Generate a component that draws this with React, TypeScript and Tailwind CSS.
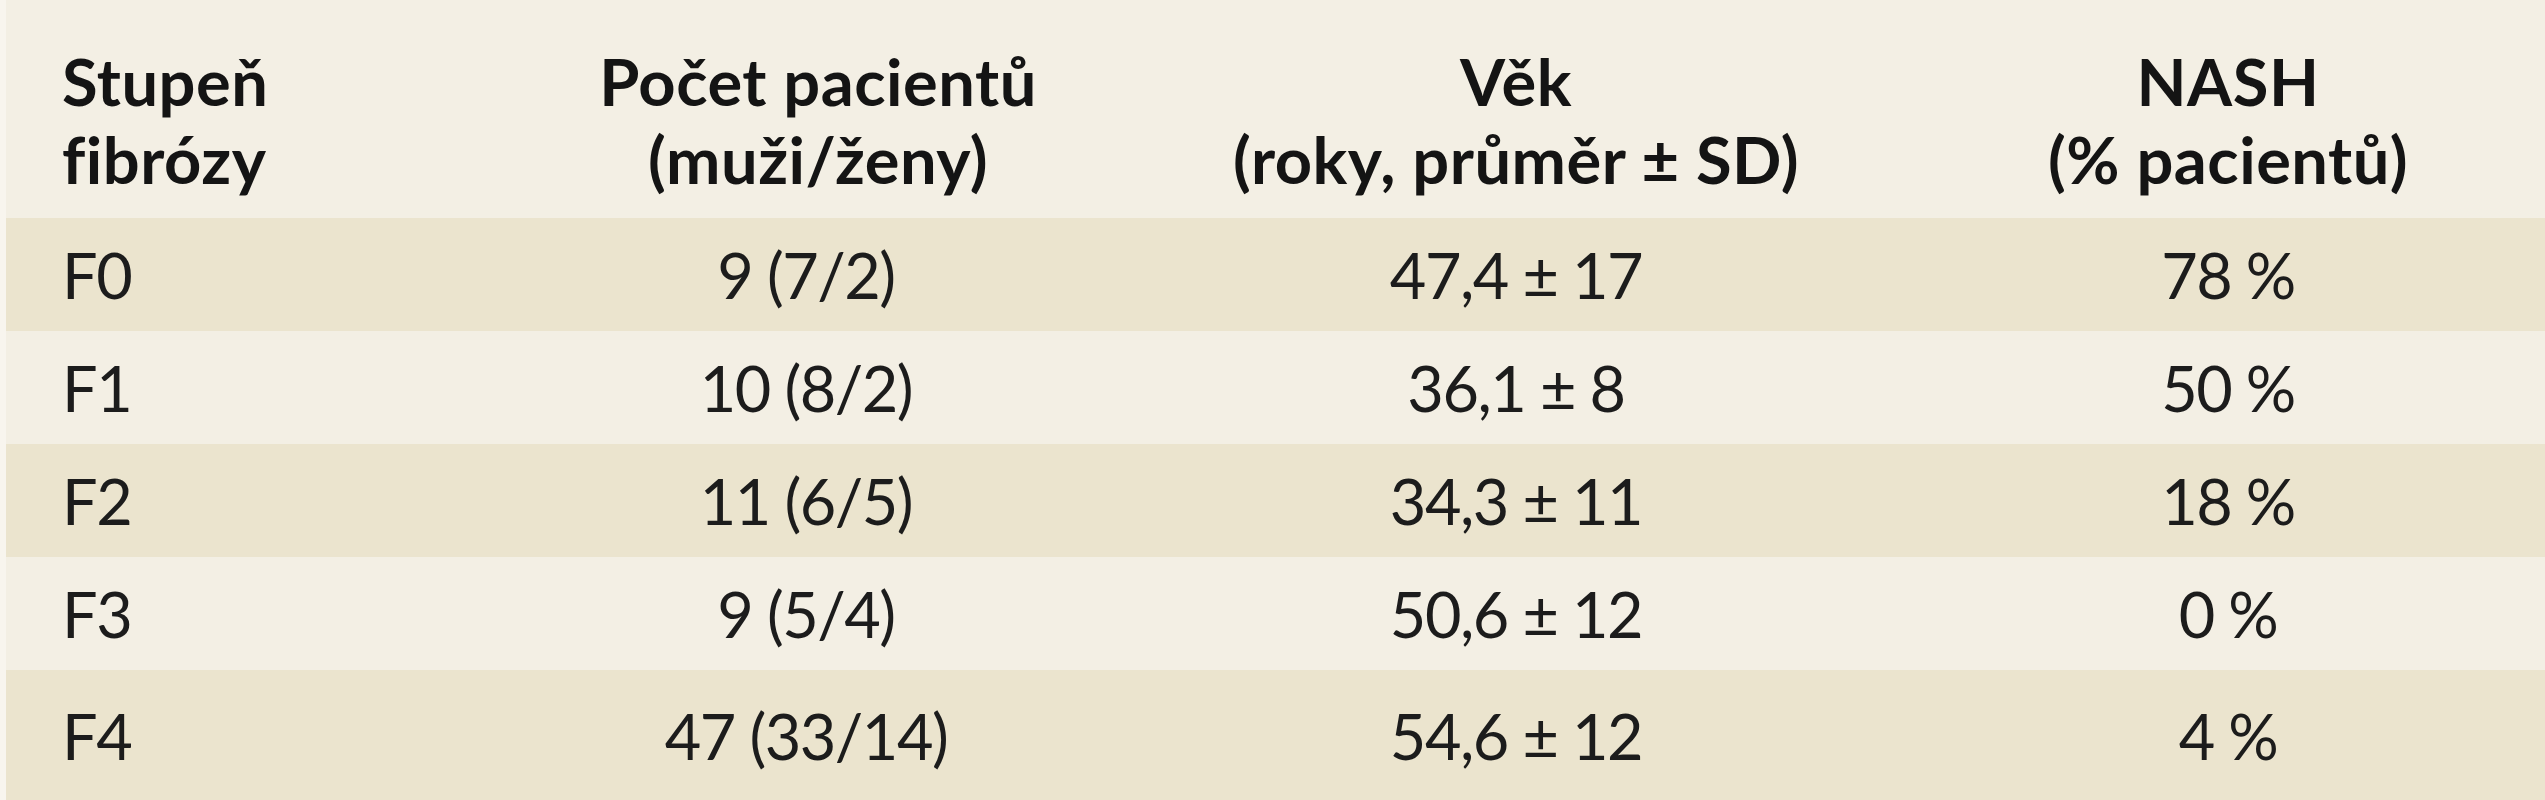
import React from 'react';

type Row = {
  grade: string;
  count: string;
  age: string;
  nash: string;
};

const rows: Row[] = [
  { grade: 'F0', count: '9 (7/2)', age: '47,4 ± 17', nash: '78 %' },
  { grade: 'F1', count: '10 (8/2)', age: '36,1 ± 8', nash: '50 %' },
  { grade: 'F2', count: '11 (6/5)', age: '34,3 ± 11', nash: '18 %' },
  { grade: 'F3', count: '9 (5/4)', age: '50,6 ± 12', nash: '0 %' },
  { grade: 'F4', count: '47 (33/14)', age: '54,6 ± 12', nash: '4 %' },
];

const cols = 'grid grid-cols-[560px_480px_940px_484px] pr-[81px]';

export default function App() {
  return (
    <div
      className="w-[2545px] h-[800px] overflow-hidden bg-[#f3efe4] border-l-[6px] border-[#f8f5ee] text-[#141414] flex flex-col"
      style={{ fontFamily: 'Lato, "Open Sans", sans-serif' }}
    >
      {/* header */}
      <div className={`${cols} h-[218px] pt-[42px] bg-[#f3efe4] text-[65px] leading-[78px] font-bold tracking-[0.5px]`}>
        <div className="pl-[56px]">
          <div>Stupeň</div>
          <div>fibrózy</div>
        </div>
        <div className="text-center pl-[24px]">
          <div>Počet pacientů</div>
          <div>(muži/ženy)</div>
        </div>
        <div className="text-center">
          <div>Věk</div>
          <div>(roky, průměr ± SD)</div>
        </div>
        <div className="text-center">
          <div>NASH</div>
          <div>(% pacientů)</div>
        </div>
      </div>

      {rows.map((row, i) => (
        <div
          key={row.grade}
          className={`${cols} items-center text-[63px] leading-none font-normal tracking-[-1.5px] text-[#1c1c1c] ${
            i % 2 === 0 ? 'bg-[#ebe4ce]' : 'bg-[#f3efe4]'
          } ${i === rows.length - 1 ? 'flex-1' : 'h-[113px]'}`}
        >
          <div className="pl-[56px]">{row.grade}</div>
          <div className="text-center">{row.count}</div>
          <div className="text-center">{row.age}</div>
          <div className="text-center">{row.nash}</div>
        </div>
      ))}
    </div>
  );
}
